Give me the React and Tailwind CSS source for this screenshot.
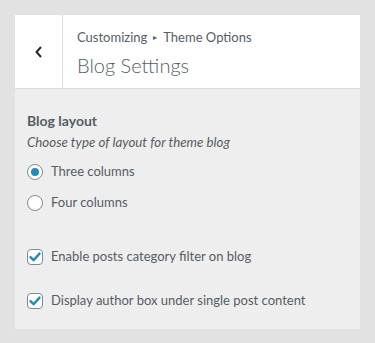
import React from "react";

function Radio({ checked, label }) {
  return (
    <label className="flex items-center h-[20px]">
      <span className="w-[16px] h-[16px] rounded-full border border-[#7e8993] bg-white flex items-center justify-center shrink-0">
        {checked && <span className="w-[8px] h-[8px] rounded-full bg-[#1e8cbe]" />}
      </span>
      <span className="ml-[8px] text-[13px] text-[#555d66]">{label}</span>
    </label>
  );
}

function Check({ label }) {
  return (
    <label className="flex items-center h-[20px]">
      <span className="w-[16px] h-[16px] rounded-[4px] border border-[#7e8993] bg-white flex items-center justify-center shrink-0">
        <svg width="14" height="14" viewBox="0 0 14 14">
          <path d="M2.5 7.2 L5.6 10.2 L11.5 3.6" fill="none" stroke="#1e8cbe" strokeWidth="2.4" strokeLinecap="round" strokeLinejoin="round" />
        </svg>
      </span>
      <span className="ml-[8px] text-[13px] text-[#555d66]">{label}</span>
    </label>
  );
}

export default function App() {
  return (
    <div className="w-[375px] h-[343px] bg-[#e2e2e2] pt-[15px] px-[15px]" style={{ fontFamily: 'Lato, "Open Sans", sans-serif' }}>
      <div className="w-[345px] bg-[#eeeeee]">
        <div className="flex bg-white border-b border-[#dddddd] h-[74px]">
          <div className="w-[48px] border-r border-[#dddddd] flex items-center justify-center">
            <svg width="12" height="14" viewBox="0 0 12 14">
              <path d="M8 2 L3.5 7 L8 12" fill="none" stroke="#23282d" strokeWidth="2" />
            </svg>
          </div>
          <div className="pl-[14px] pt-[12px]">
            <div className="text-[13px] text-[#555d66] leading-[20px] flex items-center">
              Customizing
              <span className="mx-[6px] text-[8px]">▸</span>
              Theme Options
            </div>
            <div className="text-[20px] font-light text-[#555d66] leading-[28px] mt-[4px]">Blog Settings</div>
          </div>
        </div>
        <div className="px-[12px] pt-[22px] pb-[18px]">
          <div className="text-[14px] font-bold text-[#555d66] leading-[20px]">Blog layout</div>
          <div className="text-[13.3px] italic text-[#555d66] leading-[20px] mt-[1px]">Choose type of layout for theme blog</div>
          <div className="mt-[10px] flex flex-col gap-[11px]">
            <Radio checked label="Three columns" />
            <Radio label="Four columns" />
          </div>
          <div className="mt-[34px] flex flex-col gap-[24px]">
            <Check label="Enable posts category filter on blog" />
            <Check label="Display author box under single post content" />
          </div>
        </div>
      </div>
    </div>
  );
}
